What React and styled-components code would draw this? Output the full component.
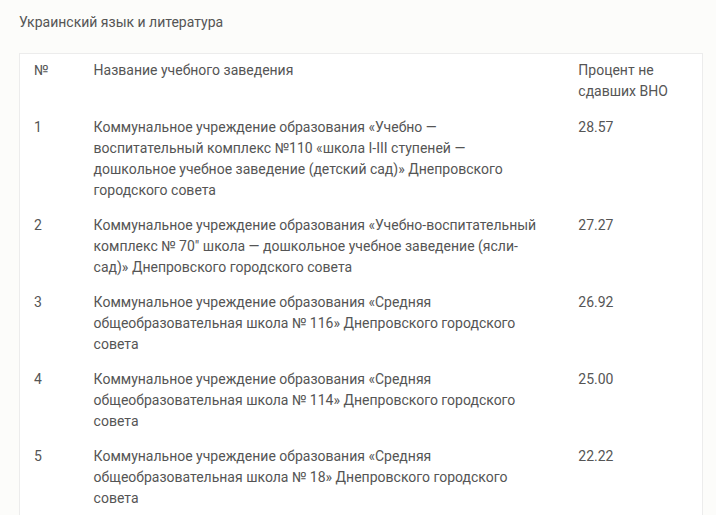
import React from 'react'
import styled, { createGlobalStyle } from 'styled-components'

const GlobalStyle = createGlobalStyle`
  html, body {
    margin: 0;
    padding: 0;
    background: #fcfcfa;
  }
`

const Page = styled.div`
  padding: 12px 13px 0 19px;
  font-family: Roboto, "Noto Sans", sans-serif;
  font-size: 14px;
  color: #555;
`

const Heading = styled.h3`
  margin: 0 0 20px;
  font-size: 14px;
  font-weight: 400;
  line-height: 21px;
  color: #555;
`

const Table = styled.table`
  width: 684px;
  table-layout: fixed;
  border-collapse: collapse;
  background: #fff;
  border: 1px solid #ececec;
  border-bottom: none;
`

const Col = styled.col`
  width: ${({ $w }) => $w};
`

const Cell = styled.td`
  box-sizing: border-box;
  vertical-align: top;
  line-height: 21px;
  padding-top: ${({ $head }) => ($head ? '6px' : '0')};
  padding-bottom: ${({ $head }) => ($head ? '15px' : '14px')};
  padding-left: ${({ $first }) => ($first ? '14px' : '8px')};
  padding-right: ${({ $name }) => ($name ? '31px' : '8px')};
`

const rows = [
  ['1', 'Коммунальное учреждение образования «Учебно — воспитательный комплекс №110 «школа I-III ступеней — дошкольное учебное заведение (детский сад)» Днепровского городского совета', '28.57'],
  ['2', 'Коммунальное учреждение образования «Учебно-воспитательный комплекс № 70″ школа — дошкольное учебное заведение (ясли-сад)» Днепровского городского совета', '27.27'],
  ['3', 'Коммунальное учреждение образования «Средняя общеобразовательная школа № 116» Днепровского городского совета', '26.92'],
  ['4', 'Коммунальное учреждение образования «Средняя общеобразовательная школа № 114» Днепровского городского совета', '25.00'],
  ['5', 'Коммунальное учреждение образования «Средняя общеобразовательная школа № 18» Днепровского городского совета', '22.22'],
]

const App = () => {
  return (
    <Page>
      <GlobalStyle />
      <Heading>Украинский язык и литература</Heading>
      <Table>
        <colgroup>
          <Col $w="66px" />
          <Col $w="484px" />
          <Col $w="132px" />
        </colgroup>
        <tbody>
          <tr>
            <Cell $head $first>№</Cell>
            <Cell $head $name>Название учебного заведения</Cell>
            <Cell $head>Процент не<br />сдавших ВНО</Cell>
          </tr>
          {rows.map(r => (
            <tr key={r[0]}>
              <Cell $first>{r[0]}</Cell>
              <Cell $name>{r[1]}</Cell>
              <Cell>{r[2]}</Cell>
            </tr>
          ))}
        </tbody>
      </Table>
    </Page>
  )
}

export default App
